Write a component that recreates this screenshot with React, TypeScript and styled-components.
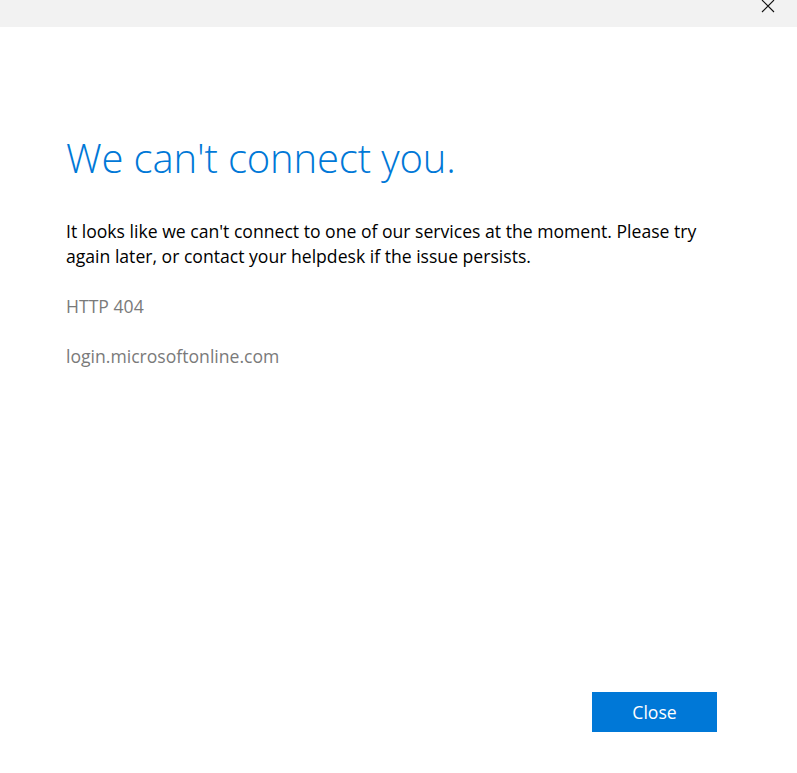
import React from "react";
import styled, { createGlobalStyle } from "styled-components";

const Global = createGlobalStyle`
  html, body { margin: 0; padding: 0; background: #ffffff; }
  body { font-family: "Open Sans", "Noto Sans", sans-serif; }
  * { box-sizing: border-box; }
`;

const Window = styled.div`
  width: 797px;
  height: 773px;
  display: flex;
  flex-direction: column;
  background: #ffffff;
  overflow: hidden;
`;

const TitleBar = styled.div`
  height: 27px;
  flex: none;
  background: #f2f2f2;
  display: flex;
  justify-content: flex-end;
  align-items: flex-start;
`;

const CloseX = styled.button`
  width: 46px;
  height: 14px;
  margin-right: 6px;
  border: 0;
  padding: 0;
  background: transparent;
  display: flex;
  align-items: flex-start;
  justify-content: center;
  svg { display: block; margin-top: -1px; }
`;

const Content = styled.main`
  flex: 1;
  display: flex;
  flex-direction: column;
  padding: 103px 80px 41px 66px;
`;

const Title = styled.h1`
  margin: 0;
  font-family: "Open Sans", sans-serif;
  font-weight: 300;
  font-size: 40px;
  line-height: 56px;
  color: #0078d7;
  letter-spacing: -0.15px;
`;

const Message = styled.p`
  margin: 33px 0 0;
  font-size: 17.6px;
  line-height: 25px;
  color: #000000;
  max-width: 660px;
`;

const Detail = styled.p<{ $top: number }>`
  margin: ${(p) => p.$top}px 0 0;
  font-size: 17.6px;
  line-height: 25px;
  color: #7a7a7a;
`;

const Spacer = styled.div`
  flex: 1;
`;

const Actions = styled.div`
  display: flex;
  justify-content: flex-end;
`;

const PrimaryButton = styled.button`
  width: 125px;
  height: 40px;
  border: 0;
  background: #0078d7;
  color: #ffffff;
  font-family: "Open Sans", sans-serif;
  font-size: 17.6px;
  cursor: pointer;
`;

export default function App() {
  return (
    <>
      <Global />
      <Window>
        <TitleBar>
          <CloseX aria-label="Close window">
            <svg width="14" height="14" viewBox="0 0 14 14">
              <path d="M1 1 L13 13 M13 1 L1 13" stroke="#111" strokeWidth="1.1" fill="none" />
            </svg>
          </CloseX>
        </TitleBar>
        <Content>
          <Title>We can't connect you.</Title>
          <Message>
            It looks like we can't connect to one of our services at the moment. Please try
            again later, or contact your helpdesk if the issue persists.
          </Message>
          <Detail $top={25}>HTTP 404</Detail>
          <Detail $top={25}>login.microsoftonline.com</Detail>
          <Spacer />
          <Actions>
            <PrimaryButton>Close</PrimaryButton>
          </Actions>
        </Content>
      </Window>
    </>
  );
}
